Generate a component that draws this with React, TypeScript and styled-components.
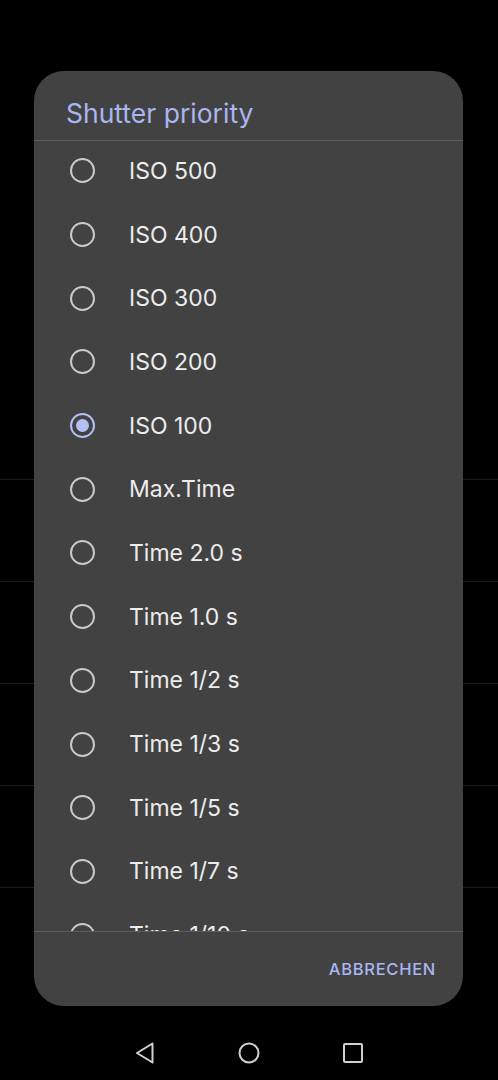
import React from 'react';
import styled, { createGlobalStyle } from 'styled-components';

const GlobalStyle = createGlobalStyle`
  html, body {
    margin: 0;
    padding: 0;
    background: #000;
  }
  body {
    font-family: Inter, Roboto, Arial, sans-serif;
  }
`;

const Screen = styled.div`
  position: relative;
  width: 498px;
  height: 1080px;
  background: #000;
  overflow: hidden;
  display: flex;
  flex-direction: column;
`;

const Backdrop = styled.div`
  flex: 1;
  display: flex;
  flex-direction: column;
  padding-top: 378px;
`;

const BackRow = styled.div`
  height: 102px;
  border-bottom: 1px solid #1b1b1b;
  box-sizing: border-box;
`;

const Dialog = styled.div`
  position: absolute;
  left: 34px;
  top: 71px;
  width: 429px;
  height: 935px;
  background: #424242;
  border-radius: 30px;
  display: flex;
  flex-direction: column;
  overflow: hidden;
`;

const Title = styled.div`
  height: 70px;
  box-sizing: border-box;
  padding: 26px 0 0 32px;
  font-size: 26.5px;
  color: #aab6f1;
  border-bottom: 1px solid #5c5c5c;
`;

const List = styled.div`
  flex: 1;
  overflow: hidden;
  border-bottom: 1px solid #5c5c5c;
`;

const ListInner = styled.div`
  margin-top: -2px;
`;

const Row = styled.div`
  height: 63.7px;
  display: flex;
  align-items: center;
  padding-left: 36px;
`;

const Radio = styled.span<{ $checked?: boolean }>`
  width: 21px;
  height: 21px;
  border-radius: 50%;
  border: 2.5px solid ${(p) => (p.$checked ? '#b3c0f6' : '#c9c9c9')};
  display: flex;
  align-items: center;
  justify-content: center;
  flex-shrink: 0;
  &::after {
    content: '';
    display: ${(p) => (p.$checked ? 'block' : 'none')};
    width: 13px;
    height: 13px;
    border-radius: 50%;
    background: #b3c0f6;
  }
`;

const Label = styled.span`
  margin-left: 34px;
  font-size: 23px;
  color: #ececec;
`;

const Footer = styled.div`
  height: 74px;
  display: flex;
  align-items: center;
  justify-content: flex-end;
  padding-right: 27px;
`;

const TextButton = styled.span`
  font-size: 16.5px;
  font-weight: 500;
  letter-spacing: 0.7px;
  color: #aab6f1;
`;

const NavBar = styled.div`
  height: 74px;
  box-sizing: border-box;
  padding-top: 20px;
  display: flex;
  justify-content: center;
  align-items: center;
  gap: 82px;
  flex-shrink: 0;
`;

const NavIcon = styled.svg`
  width: 22px;
  height: 22px;
  fill: none;
  stroke: #d0d0d0;
  stroke-width: 2;
`;

const options = [
  'ISO 500',
  'ISO 400',
  'ISO 300',
  'ISO 200',
  'ISO 100',
  'Max.Time',
  'Time 2.0 s',
  'Time 1.0 s',
  'Time 1/2 s',
  'Time 1/3 s',
  'Time 1/5 s',
  'Time 1/7 s',
  'Time 1/10 s',
];

const App: React.FC = () => {
  const selected = 'ISO 100';
  return (
    <>
      <GlobalStyle />
      <Screen>
        <Backdrop>
          {[0, 1, 2, 3, 4].map((i) => (
            <BackRow key={i} />
          ))}
        </Backdrop>
        <NavBar>
          <NavIcon viewBox="0 0 22 22">
            <path d="M18.5 1.5 L3 11 L18.5 20.5 Z" strokeLinejoin="round" />
          </NavIcon>
          <NavIcon viewBox="0 0 22 22">
            <circle cx="11" cy="11" r="9.5" />
          </NavIcon>
          <NavIcon viewBox="0 0 22 22">
            <rect x="2" y="2" width="18" height="18" rx="1" />
          </NavIcon>
        </NavBar>
        <Dialog>
          <Title>Shutter priority</Title>
          <List>
            <ListInner>
              {options.map((o) => (
                <Row key={o}>
                  <Radio $checked={o === selected} />
                  <Label>{o}</Label>
                </Row>
              ))}
            </ListInner>
          </List>
          <Footer>
            <TextButton>ABBRECHEN</TextButton>
          </Footer>
        </Dialog>
      </Screen>
    </>
  );
};

export default App;
